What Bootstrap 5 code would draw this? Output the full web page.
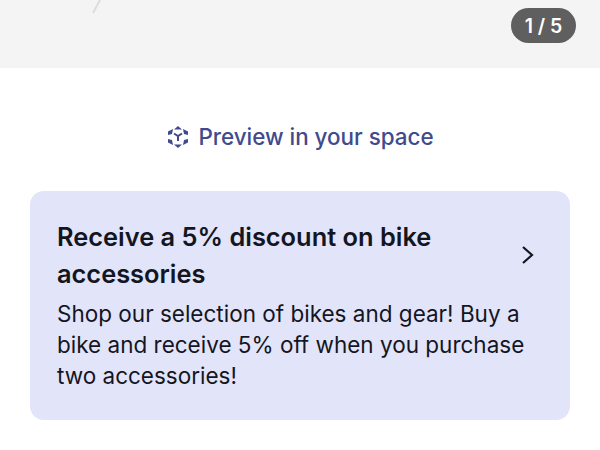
<!DOCTYPE html>
<html lang="en">
<head>
    <meta charset="UTF-8">
    <meta name="viewport" content="width=device-width, initial-scale=1.0">
    <title>Product</title>
    <link href="https://cdn.jsdelivr.net/npm/bootstrap@5.3.0/dist/css/bootstrap.min.css" rel="stylesheet">
    <style>
        body {
            font-family: Inter, "Liberation Sans", sans-serif;
            background-color: #fff;
            width: 600px;
            height: 450px;
            overflow: hidden;
        }

        .hero-strip {
            height: 68px;
            background-color: #f4f4f4;
            padding: 8px 24px 0 0;
        }

        .hero-mark {
            left: 88px;
            top: 0;
        }

        .count-pill {
            width: 65px;
            height: 35px;
            padding-top: 2px;
            background-color: #5f5f5f;
            border-radius: 18px;
            color: #fff;
            font-size: 19.5px;
            font-weight: 600;
        }

        .preview-row {
            height: 123px;
            padding-top: 14px;
            color: #414a8c;
            font-size: 22.4px;
            font-weight: 500;
        }

        .promo-box {
            margin: 0 30px;
            height: 229px;
            background-color: #e2e4fa;
            border-radius: 14px;
            padding: 27px 35px 0 27px;
            color: #14161f;
        }

        .promo-title {
            font-size: 25.4px;
            font-weight: 600;
            line-height: 37px;
            margin-bottom: 0;
        }

        .promo-text {
            font-size: 22.5px;
            line-height: 31px;
            margin-top: 6px;
            white-space: nowrap;
        }
    </style>
</head>
<body>

    <div class="hero-strip position-relative d-flex justify-content-end align-items-start">
        <svg class="hero-mark position-absolute" width="24" height="16" viewBox="0 0 24 16">
            <path d="M12 0 L5 13" stroke="#dcdcdc" stroke-width="2" fill="none"/>
        </svg>
        <div class="count-pill d-flex align-items-center justify-content-center">1 / 5</div>
    </div>

    <div class="preview-row d-flex align-items-center justify-content-center gap-2">
        <svg width="24" height="24" viewBox="0 0 24 24" fill="#414a8c">
            <path d="M12 1 L16 4.5 L8 4.5 Z"/>
            <path d="M2 6.5 L7 4 L6 9 L2 10 Z"/>
            <path d="M22 6.5 L17 4 L18 9 L22 10 Z"/>
            <path d="M2 17.5 L7 20 L6 15 L2 14 Z"/>
            <path d="M22 17.5 L17 20 L18 15 L22 14 Z"/>
            <path d="M12 23 L16 19.5 L8 19.5 Z"/>
            <path d="M8 8.5 L12 11 L16 8.5 M12 11 V16" stroke="#414a8c" stroke-width="2" fill="none"/>
        </svg>
        <span>Preview in your space</span>
    </div>

    <div class="promo-box">
        <div class="d-flex justify-content-between align-items-center">
            <h2 class="promo-title">Receive a 5% discount on bike<br>accessories</h2>
            <svg width="14" height="20" viewBox="0 0 14 20">
                <path d="M2 2 L11 10 L2 18" stroke="#14161f" stroke-width="2.2" fill="none"/>
            </svg>
        </div>
        <p class="promo-text mb-0">Shop our selection of bikes and gear! Buy a<br>bike and receive 5% off when you purchase<br>two accessories!</p>
    </div>

    <script src="https://cdn.jsdelivr.net/npm/bootstrap@5.3.0/dist/js/bootstrap.bundle.min.js"></script>
</body>
</html>
